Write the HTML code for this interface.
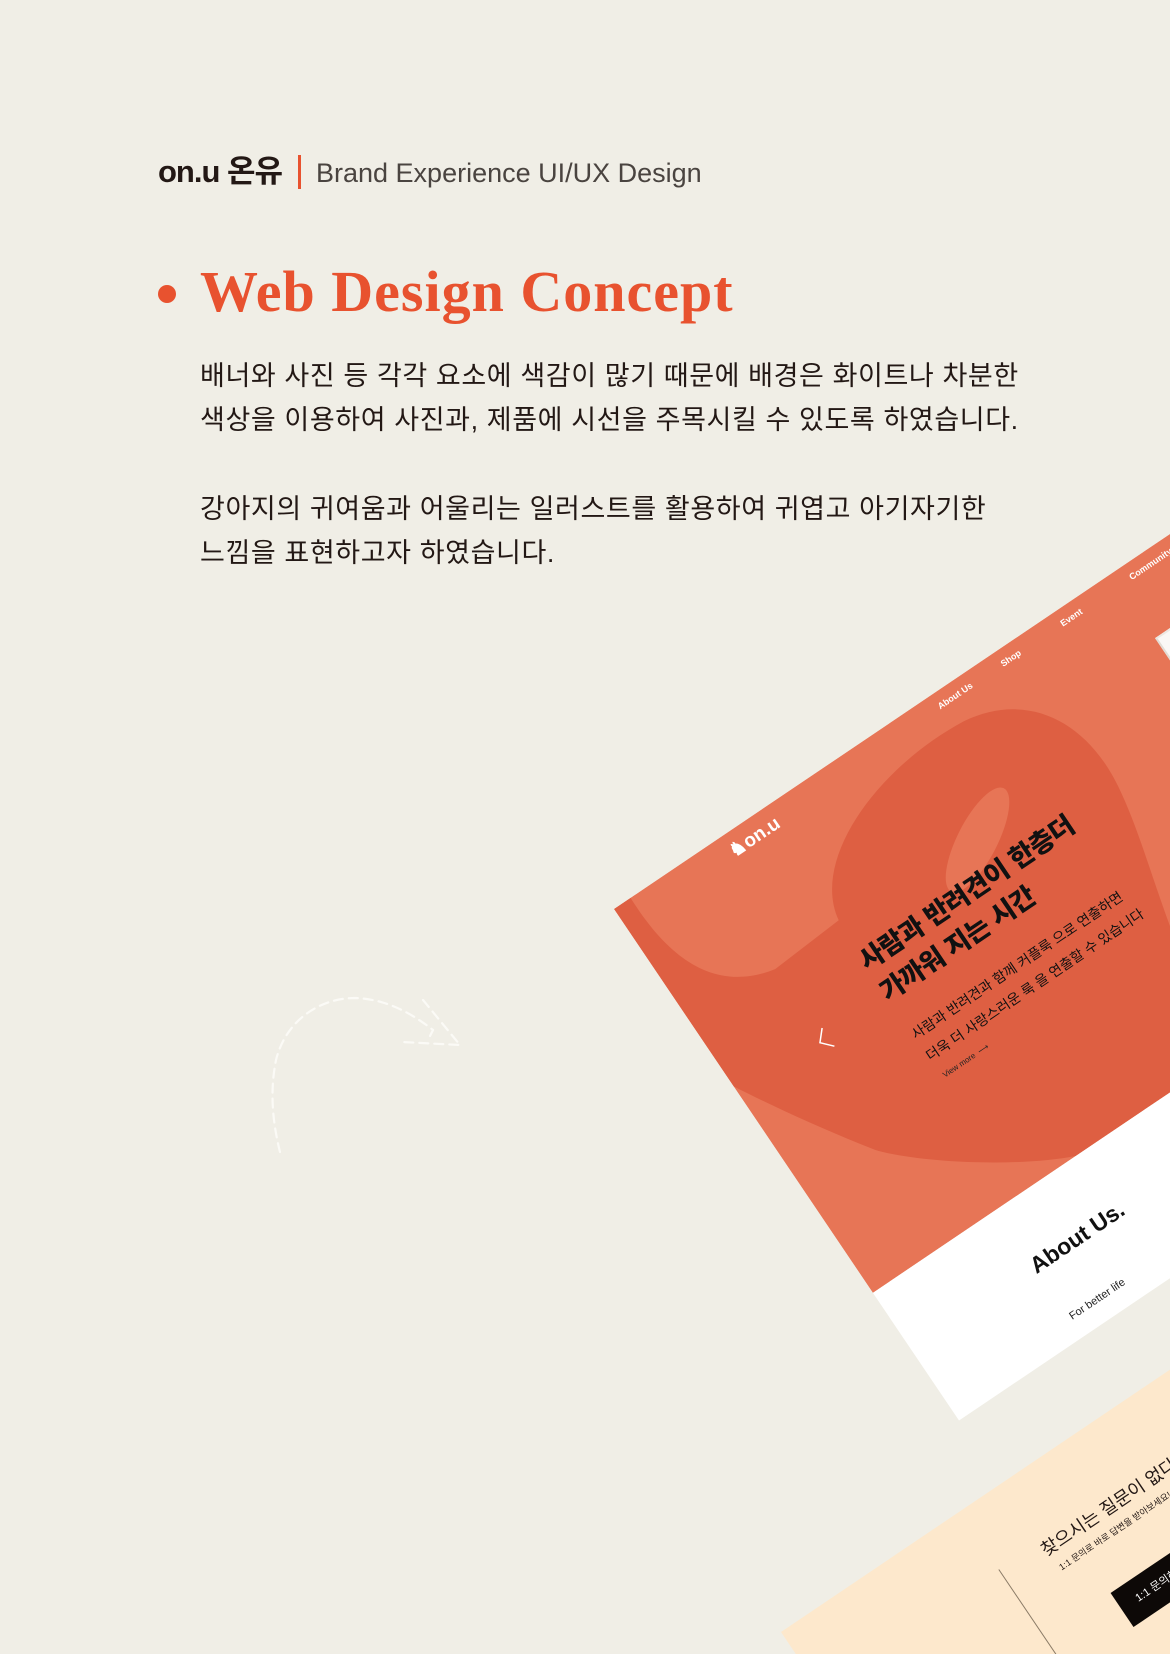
<!DOCTYPE html>
<html><head><meta charset="utf-8">
<style>
html,body{margin:0;padding:0;width:1170px;height:1654px;overflow:hidden}
body{background:#f0eee6;font-family:"Liberation Sans","Noto Sans CJK KR",sans-serif}
#wrap{position:relative;width:1170px;height:1654px;overflow:hidden;background:#f0eee6}
.abs{position:absolute;white-space:nowrap}
.kr{font-family:"Liberation Sans","Noto Sans CJK KR",sans-serif}
</style></head><body><div id="wrap">

<div class="abs" style="left:158px;top:152px;font-size:31px;font-weight:bold;color:#231815;letter-spacing:-1px;line-height:40px">on.u 온유</div>
<div class="abs" style="left:298px;top:155px;width:3px;height:34px;background:#e8522f"></div>
<div class="abs" style="left:316px;top:154px;font-size:27px;color:#4a4440;line-height:38px">Brand Experience UI/UX Design</div>

<div class="abs" style="left:158px;top:285px;width:18px;height:18px;border-radius:50%;background:#e8522f"></div>
<div class="abs" style="left:200px;top:257px;font-family:'Liberation Serif',serif;font-weight:bold;font-size:58px;color:#e8522f;line-height:70px;letter-spacing:1px">Web Design Concept</div>

<div class="abs kr" style="left:200px;top:354px;font-size:27px;color:#231815;line-height:44px;letter-spacing:0.6px">배너와 사진 등 각각 요소에 색감이 많기 때문에 배경은 화이트나 차분한<br>색상을 이용하여 사진과, 제품에 시선을 주목시킬 수 있도록 하였습니다.</div>
<div class="abs kr" style="left:200px;top:487px;font-size:27px;color:#231815;line-height:44px;letter-spacing:0.6px">강아지의 귀여움과 어울리는 일러스트를 활용하여 귀엽고 아기자기한<br>느낌을 표현하고자 하였습니다.</div>

<!-- dashed arrow -->
<svg class="abs" style="left:0;top:0" width="1170" height="1654">
<g fill="none" stroke="#fbfaf6" stroke-width="2.2" stroke-dasharray="9 6" stroke-linecap="round">
<path d="M280 1152 C272 1120 270 1090 276 1060 C286 1020 320 998 355 998 C385 999 410 1012 433 1030"/>
<path d="M423 1000 L460 1045 L402 1042"/>
<path d="M430 1036 L433 1030"/>
</g>
</svg>

<!-- peach page -->
<div class="abs" style="left:781px;top:1632px;width:900px;height:500px;background:#fde8cc;transform-origin:0 0;transform:rotate(-34deg)">
  <div class="abs kr" style="left:262px;top:66px;font-size:18px;color:#231815">찾으시는 질문이 없다면?</div>
  <div class="abs kr" style="left:267px;top:96px;font-size:9px;color:#231815">1:1 문의로 바로 답변을 받아보세요!</div>
  <div class="abs" style="left:215px;top:70px;width:1px;height:120px;background:#8a7a66"></div>
  <div class="abs kr" style="left:295px;top:152px;width:130px;height:41px;background:#0d0907;color:#fff;font-size:11px;line-height:41px;padding-left:18px">1:1 문의하기</div>
</div>

<!-- orange page -->
<div class="abs" style="left:614px;top:909px;width:1000px;height:617px;transform-origin:0 0;transform:rotate(-34deg)">
  <svg class="abs" style="left:0;top:0" width="1000" height="463">
    <rect width="1000" height="463" fill="#e77556"/>
    <path d="M0 0 L20 0 C18 60 30 125 100 140 L180 135 C190 70 295 30 395 40 C465 50 500 110 485 190 C473 260 445 320 425 463 L245 463 C190 440 110 380 82 346 C50 300 20 250 0 214 Z" fill="#de5f42"/>
    <ellipse cx="340" cy="146" rx="58" ry="20" transform="rotate(-29 340 146)" fill="#e77556"/>
  </svg>
  <div class="abs" style="left:0;top:463px;width:1000px;height:154px;background:#fff"></div>
  <!-- product -->
  <div class="abs" style="left:600px;top:78px;width:110px;height:100px;background:#faf8f5;border-left:2px solid #e2ddd5;border-top:2px solid #ece8e2"></div>

  <div class="abs" style="left:128px;top:8px;font-size:19px;font-weight:bold;color:#fff">♞on.u</div>
  <div class="abs" style="left:382px;top:9px;font-size:9px;font-weight:bold;color:#fff">About Us</div>
  <div class="abs" style="left:458px;top:9px;font-size:9px;font-weight:bold;color:#fff">Shop</div>
  <div class="abs" style="left:530px;top:9px;font-size:9px;font-weight:bold;color:#fff">Event</div>
  <div class="abs" style="left:613px;top:9px;font-size:9px;font-weight:bold;color:#fff">Community</div>

  <div class="abs kr" style="left:175px;top:166px;font-size:26.5px;font-weight:900;color:#111;line-height:37px;letter-spacing:-0.5px">사람과 반려견이 한층더<br>가까워 지는 시간</div>
  <div class="abs kr" style="left:177px;top:259px;font-size:14px;color:#111;line-height:26px">사람과 반려견과 함께 커플룩 으로 연출하면<br>더욱 더 사랑스러운 룩 을 연출할 수 있습니다</div>
  <div class="abs" style="left:180px;top:318px;font-size:8px;color:#222">View more &nbsp;⟶</div>
  <svg class="abs" style="left:92px;top:212px" width="20" height="30"><path d="M14 3 L4 14 L14 25" fill="none" stroke="#fff" stroke-width="1.5"/></svg>

  <div class="abs" style="left:146px;top:518px;font-size:23px;font-weight:bold;color:#111">About Us.</div>
  <div class="abs" style="left:150px;top:588px;font-size:11px;color:#222">For better life</div>
</div>

</div></body></html>
